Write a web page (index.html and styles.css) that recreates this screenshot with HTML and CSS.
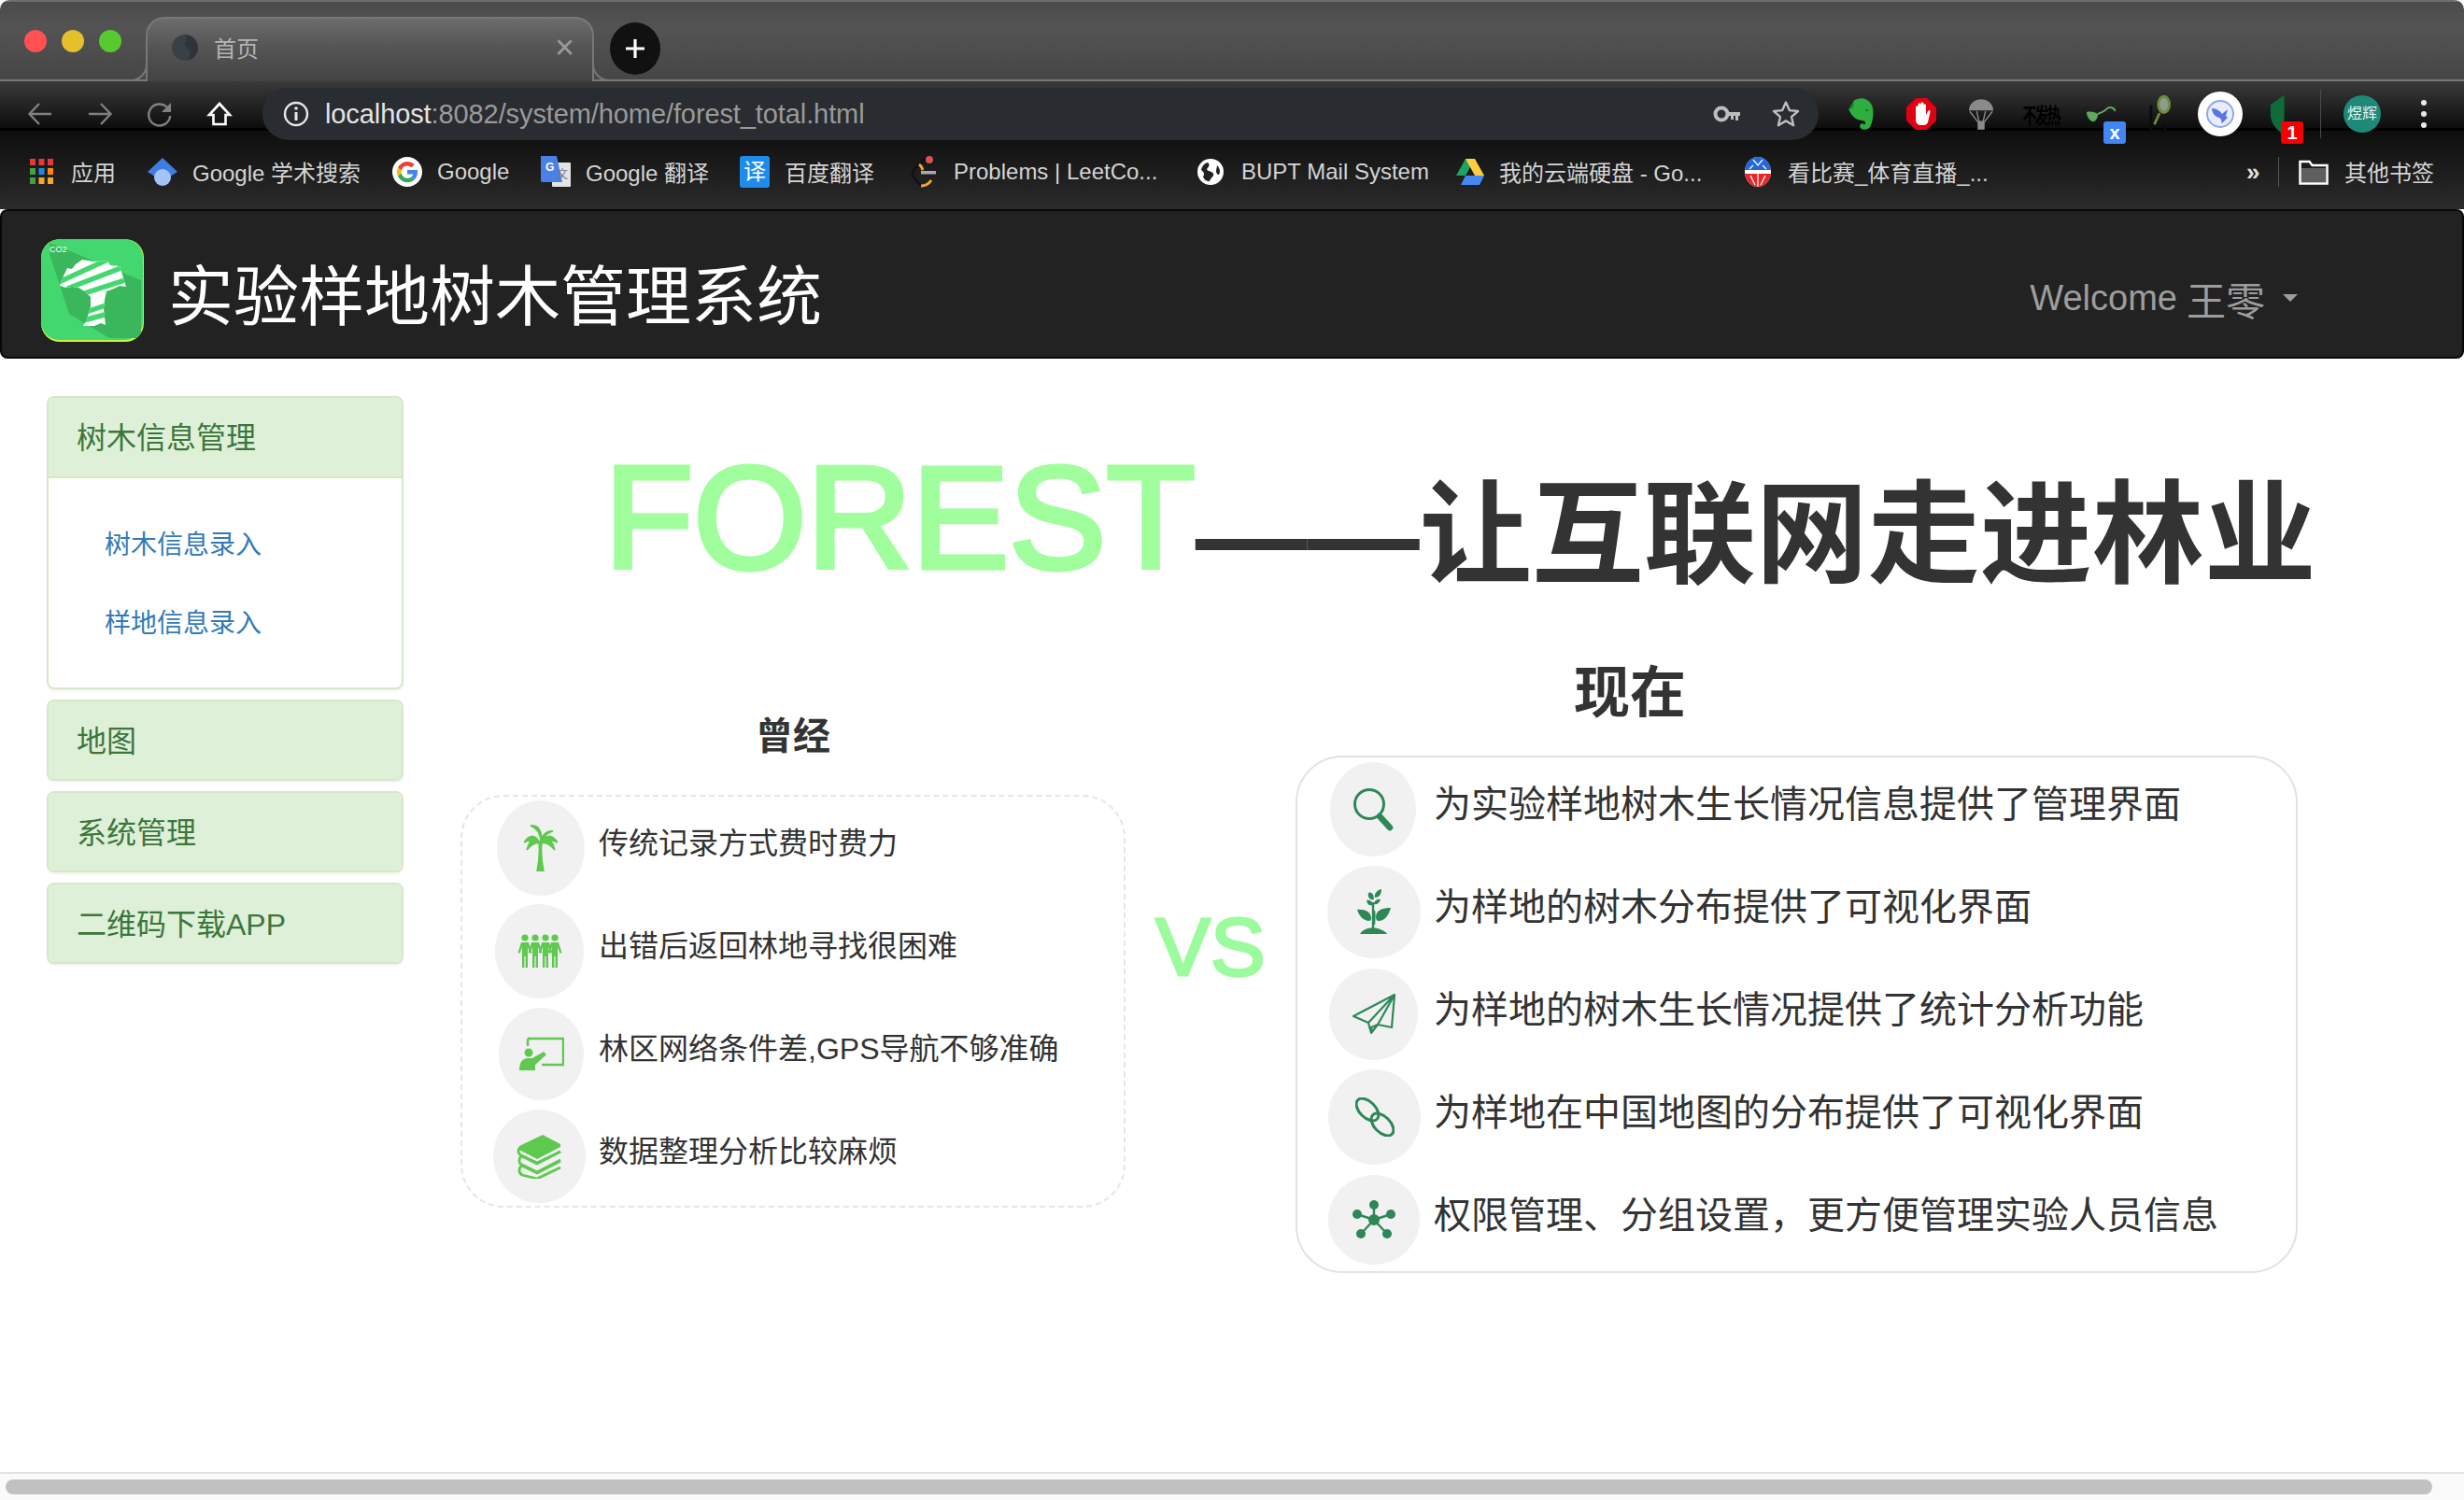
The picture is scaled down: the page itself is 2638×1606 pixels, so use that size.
FILE: index.html
```html
<!DOCTYPE html>
<html lang="zh">
<head>
<meta charset="utf-8">
<title>首页</title>
<link rel="stylesheet" href="styles.css">
</head>
<body>
<svg class="defs" width="0" height="0" aria-hidden="true">
  <symbol id="person" viewBox="0 0 16 36">
    <circle cx="8" cy="4" r="3.6"/>
    <path d="M4 9h8l3.5 11-2 .8L11 14v22H8.6V24H7.4v12H5V14L2.500 20.800l-2-.8z"/>
  </symbol>
</svg>
<div class="browser">
  <div class="tabstrip">
    <div class="lights"><span class="light red"></span><span class="light yellow"></span><span class="light green"></span></div>
    <div class="tab">
      <svg class="favicon" viewBox="0 0 28 28"><circle cx="14" cy="14" r="14" fill="#3a4048"/><path d="M14 0c5 4-3 8 1 13s5 2 4 9-4 6-5 6C22 28 28 21 28 14S21 0 14 0z" fill="#2f343a"/></svg>
      <span class="tab-title">首页</span>
      <span class="tab-close">×</span>
    </div>
    <div class="newtab"><svg viewBox="0 0 24 24" width="24" height="24"><path d="M12 2v20M2 12h20" stroke="#fff" stroke-width="3.200"/></svg></div>
  </div>
  <div class="toolbar">
    <div class="toolbar-inner">
      <div class="navcells">
        <span class="cell"><svg viewBox="0 0 28 28" width="28" height="28"><path d="M26 14H3M13 3 2.500 14 13 25" fill="none" stroke="#808080" stroke-width="2.400"/></svg></span>
        <span class="cell"><svg viewBox="0 0 28 28" width="28" height="28"><path d="M2 14h23M15 3l10.500 11L15 25" fill="none" stroke="#808080" stroke-width="2.400"/></svg></span>
        <span class="cell"><svg viewBox="0 0 28 28" width="28" height="28"><path d="M22 7a11.500 11.500 0 1 0 3.200 9" fill="none" stroke="#808080" stroke-width="2.400"/><path d="M26 2v10H16z" fill="#808080"/></svg></span>
        <span class="cell"><svg viewBox="0 0 28 28" width="28" height="28"><path d="M14 3 3 15h4.500v10h13V15H25z" fill="none" stroke="#fff" stroke-width="2.600"/></svg></span>
      </div>
      <div class="omnibox">
        <svg class="info" viewBox="0 0 28 28" width="28" height="28"><circle cx="14" cy="14" r="12" fill="none" stroke="#e8e8e8" stroke-width="2.400"/><path d="M14 12v9" stroke="#e8e8e8" stroke-width="3"/><circle cx="14" cy="8" r="1.800" fill="#e8e8e8"/></svg>
        <span class="url"><span class="host">localhost</span>:8082/system/home/forest_total.html</span>
        <span class="omni-right">
          <svg viewBox="0 0 30 20" width="30" height="20"><circle cx="9" cy="10" r="6.500" fill="none" stroke="#bdbdbd" stroke-width="4"/><path d="M15 8h14v4h-2v5h-3v-5h-2v4h-3v-4h-4z" fill="#bdbdbd"/></svg>
          <svg viewBox="0 0 30 30" width="30" height="30"><path d="m15 2.500 3.800 8.600 9.200.9-7 6.100 2.100 9.100L15 22.400l-8.100 4.800L9 18.100 2 12l9.200-.9z" fill="none" stroke="#bdbdbd" stroke-width="2.400" stroke-linejoin="round"/></svg>
        </span>
      </div>
      <div class="extensions">
        <span class="cell"><svg viewBox="0 0 30 36" width="28" height="34"><path d="M6 3c2-2 6-3 10-3 6 1 11 5 12 12 1 6 0 13-2 18-1 4-4 6-8 6-3 0-5-2-5-4 0-3 3-4 5-2 2 1 2-3 0-4-3-1-8-1-10-3-3-2-6-6-8-11 3 0 5-1 5-3 0-2 0-4 1-6z" fill="#2dae3f"/><path d="M6 3v8H1z" fill="#1f8a2e"/><path d="M19 12c2 0 4 1 4 3-2 0-3 0-4-3z" fill="#1a7a28"/></svg></span>
        <span class="cell"><svg viewBox="0 0 32 36" width="32" height="36"><path d="M10 1h12l10 10v14L22 35H10L0 25V11z" fill="#e00012"/><path d="M10 17v-6c0-2 2.500-2 2.500 0v4-7c0-2 3-2 3 0v7-8c0-2 3-2 3 0v8-6c0-2 2.500-2 2.500 0v10l2-4c1-2 3-1 2.500 1L23 27c-1 2-2 3-5 3h-3c-3 0-5-3-5-6z" fill="#fff"/></svg></span>
        <span class="cell"><svg viewBox="0 0 30 36" width="28" height="34"><path d="M1 14C1 6 8 1 15 1s14 5 14 13z" fill="#8a8a8a"/><path d="M2 15l10 13M28 15 18 28M10 15l3 13M20 15l-3 13" stroke="#8a8a8a" stroke-width="1.500"/><rect x="11" y="26" width="8" height="10" fill="#8a8a8a"/></svg></span>
        <span class="cell"><span class="nofever">不发热</span></span>
        <span class="cell ext-badged"><svg viewBox="0 0 32 20" width="32" height="20"><path d="M1 8c5-1 9 0 12 2 0 5-3 9-6 8-3-1-6-5-6-10z" fill="#5fa85c"/><path d="M13 10c4-2 8-3 10-6 3-2 7-1 9 3" fill="none" stroke="#5fa85c" stroke-width="2"/></svg><span class="badge badge-blue">x</span></span>
        <span class="cell"><svg viewBox="0 0 26 48" width="24" height="46"><ellipse cx="17" cy="13" rx="8" ry="11" fill="#6f8b3d"/><ellipse cx="17" cy="13" rx="5" ry="7.500" fill="#8d9a8c"/><path d="M12 23 6 36" stroke="#6f8b3d" stroke-width="3"/><path d="M2 14v30h16v-8" fill="none" stroke="#0c0c0c" stroke-width="3"/></svg></span>
        <span class="cell"><span class="surge"><svg viewBox="0 0 32 32" width="32" height="32"><circle cx="16" cy="16" r="14" fill="#e8eefc" stroke="#8ea7f2" stroke-width="2"/><path d="M7 10c5 0 9 3 11 6l6-5-2 7 2 2c-3 2-4 5-7 6 1-3 0-5-2-6C10 19 7 14 7 10z" fill="#5876e6"/></svg></span></span>
        <span class="cell ext-badged"><svg viewBox="0 0 24 44" width="22" height="44"><path d="M17 0v36l-4 8C8 40 2 34 1 24V11z" fill="#0f6b3a"/></svg><span class="badge badge-red">1</span></span>
      </div>
      <span class="tool-sep"></span>
      <span class="avatar">煜辉</span>
      <span class="menu-dots"><i></i><i></i><i></i></span>
    </div>
  </div>
  <div class="bookmarks">
    <a class="bm bm-apps"><svg viewBox="0 0 25 27" width="25" height="27"><g fill="#e53935"><rect width="6" height="7"/><rect x="9.500" width="6" height="7"/><rect x="19" width="6" height="7"/></g><rect y="10" width="6" height="7" fill="#43a047"/><rect x="9.500" y="10" width="6" height="7" fill="#1e88e5"/><rect x="19" y="10" width="6" height="7" fill="#fb8c00"/><g fill="#f9a825"><rect x="9.500" y="20" width="6" height="7"/><rect x="19" y="20" width="6" height="7"/></g><rect y="20" width="6" height="7" fill="#43a047"/></svg><span>应用</span></a>
    <a class="bm bm-scholar"><svg viewBox="0 0 32 30" width="32" height="30"><path d="M16 0 32 15l-8 5H8l-8-5z" fill="#3f7ee0"/><circle cx="16" cy="21" r="9" fill="#a6c3f5"/></svg><span>Google 学术搜索</span></a>
    <a class="bm bm-google"><svg viewBox="0 0 32 32" width="32" height="32"><circle cx="16" cy="16" r="16" fill="#fff"/><path d="M16 9.500a6.500 6.500 0 0 1 4.500 1.700l3.300-3.300A11.300 11.300 0 0 0 6 11.500l3.800 3A6.700 6.700 0 0 1 16 9.500z" fill="#ea4335"/><path d="M5.900 11.400a11.300 11.300 0 0 0 0 9.200l3.800-3a6.700 6.700 0 0 1 0-3.200z" fill="#fbbc05"/><path d="M9.700 17.600l-3.800 3A11.300 11.300 0 0 0 16 27.300c3 0 5.700-1 7.600-2.800l-3.600-2.800a6.700 6.700 0 0 1-10.300-4.100z" fill="#34a853"/><path d="M27 14H16v4.500h6.300a5.500 5.500 0 0 1-2.300 3.200l3.600 2.800C26 22.400 27.500 19 27 14z" fill="#4285f4"/></svg><span>Google</span></a>
    <a class="bm bm-trans"><svg viewBox="0 0 32 34" width="32" height="34"><rect x="12" y="7" width="20" height="26" rx="1" fill="#e4e4e4"/><path d="M0 0h17l6 28H2a2 2 0 0 1-2-2z" fill="#4a80e8"/><text x="5" y="16" class="ico-g">G</text><text x="17" y="24" class="ico-wen">文</text></svg><span>Google 翻译</span></a>
    <a class="bm bm-baidu"><span class="baidu-ico">译</span><span>百度翻译</span></a>
    <a class="bm bm-leet"><svg viewBox="0 0 28 34" width="28" height="34"><path d="M16 2 4 14c-3 4-3 7 0 10l7 8" fill="none" stroke="#111" stroke-width="2.500"/><path d="M11 32c5 0 9-3 11-6M9 9c3 2 3 4 4 6" fill="none" stroke="#f0a830" stroke-width="3"/><rect x="11" y="16" width="16" height="3.500" fill="#aaa"/><circle cx="20" cy="4" r="4" fill="#d9534f"/></svg><span>Problems | LeetCo...</span></a>
    <a class="bm bm-bupt"><svg viewBox="0 0 28 30" width="28" height="30"><circle cx="14" cy="15" r="14" fill="#fff"/><path d="M11 5c3 2 1 5-1 7 1 3 6 2 7 5s-3 4-4 8c-4 0-6-2-7-5 2-2 1-5-2-7 1-4 3-7 7-8zM21 8c3 3 4 7 2 10-2 0-3-2-3-4s1-4 1-6z" fill="#222"/></svg><span>BUPT Mail System</span></a>
    <a class="bm bm-drive"><svg viewBox="0 0 30 28" width="30" height="28"><path d="M10 0h10L10 18H0z" fill="#1da462"/><path d="M10 0h10l10 18H20z" fill="#ffcd40"/><path d="M5 28l5-10h20l-5 10z" fill="#4688f1"/></svg><span>我的云端硬盘 - Go...</span></a>
    <a class="bm bm-sport"><svg viewBox="0 0 28 32" width="28" height="32"><ellipse cx="14" cy="16" rx="14" ry="16" fill="#fff"/><path d="M0 14C1 6 7 0 14 0s13 6 14 14z" fill="#2467d8"/><path d="M0 18h28c-1 8-7 14-14 14S1 26 0 18z" fill="#e32a2a"/><path d="M9 3l5 6 5-6M5 13l4-4M23 13l-4-4M14 18v14M6 20l5 10M22 20l-5 10" stroke="#fff" stroke-width="1.200" fill="none"/></svg><span>看比赛_体育直播_...</span></a>
    <span class="bm-more">»</span>
    <span class="bm-sep"></span>
    <a class="bm bm-folder"><svg viewBox="0 0 32 28" width="32" height="28"><path d="M1.500 3h10l3 4h16v19.500h-29z" fill="none" stroke="#fff" stroke-width="2.500"/><rect x="3" y="10" width="26" height="15" fill="#5f5f5f"/></svg><span>其他书签</span></a>
  </div>
</div>

<header class="navbar">
  <div class="brand">
    <svg class="logo" viewBox="0 0 110 110" width="110" height="110">
      <defs>
        <clipPath id="logoclip"><rect width="110" height="110" rx="20"/></clipPath>
        <clipPath id="treeclip"><path d="M20 50C22 42 26 36 28 31L33 32 37 27 44 22 56 24 71 23 74 28 84 29 87 38 91 51 84 50 78 53 70 56 68 65 67 75 69 92 64 90 57 93 45 93 49 86 53 72 53 62 47 56 40 52 33 51 27 52Z"/></clipPath>
      </defs>
      <g clip-path="url(#logoclip)">
        <rect width="110" height="110" fill="#cdf03a"/>
        <rect width="109" height="108" rx="20" fill="#43d86f"/>
        <path d="M9 4 107 44v62H73L30 80 9 16z" fill="#3ab75c"/>
        <g clip-path="url(#treeclip)">
          <rect width="110" height="110" fill="#fff"/>
          <path d="M10 50 80 18M28 53 96 27M40 60 96 42M45 79 75 69M42 88 75 79" stroke="#43d86f" stroke-width="5.500" fill="none"/>
        </g>
        <text x="9" y="14" class="logo-co">CO2</text>
      </g>
    </svg>
    <span class="brand-name">实验样地树木管理系统</span>
  </div>
  <div class="nav-user"><span class="welcome">Welcome</span> <span class="user-name">王零</span><span class="caret"></span></div>
</header>

<div class="page">
  <aside class="sidebar">
    <section class="panel">
      <h4 class="panel-heading">树木信息管理</h4>
      <ul class="panel-body">
        <li><a>树木信息录入</a></li>
        <li><a>样地信息录入</a></li>
      </ul>
    </section>
    <section class="panel"><h4 class="panel-heading solo">地图</h4></section>
    <section class="panel"><h4 class="panel-heading solo">系统管理</h4></section>
    <section class="panel"><h4 class="panel-heading solo">二维码下载APP</h4></section>
  </aside>

  <main class="content">
    <h1 class="hero"><span class="hero-brand">FOREST</span>——让互联网走进林业</h1>
    <div class="compare">
      <section class="col-old">
        <h3 class="old-title">曾经</h3>
        <ul class="box box-old">
          <li class="row"><span class="disc d1"><svg viewBox="0 0 36 50" width="36" height="50" class="ico-light"><path d="M16 19c1 10 0 21-2 31h7c-2-10-3-21-2-31zM17 20C13 10 6 10 0 19c5-3 10-3 17 1zM19 20c4-10 11-10 17-1-5-3-10-3-17 1zM17 19C13 13 7 13 3 27c5-6 9-8 14-8zM19 19c4-6 10-6 14 8-5-6-9-8-14-8zM18 19C18 10 15 4 7 1c7-1 14 5 11 18zM18 19c1-8 6-13 13-12-6 1-9 6-13 12z" stroke="#5ec84f" stroke-width="1.500"/></svg></span><span class="row-text">传统记录方式费时费力</span></li>
          <li class="row"><span class="disc d2"><svg viewBox="0 0 48 36" width="48" height="36" class="ico-light"><use href="#person" x="0" width="16" height="36"/><use href="#person" x="11" width="16" height="36"/><use href="#person" x="22" width="16" height="36"/><use href="#person" x="32" width="16" height="36"/></svg></span><span class="row-text">出错后返回林地寻找很困难</span></li>
          <li class="row"><span class="disc d3"><svg viewBox="0 0 48 36" width="48" height="36" class="ico-light"><path d="M9 2h38v28H24" fill="none" stroke="#5ec84f" stroke-width="2.400"/><path d="M9 2v8" fill="none" stroke="#5ec84f" stroke-width="2.400"/><circle cx="10" cy="17" r="4.500"/><path d="M0 36c0-8 3-13 9-13h5l12-7 3 3-12 11v6z"/></svg></span><span class="row-text">林区网络条件差,GPS导航不够准确</span></li>
          <li class="row"><span class="disc d4"><svg viewBox="0 0 50 48" width="50" height="48"><path d="M3 13 28 1l19 10v3L22 27 3 17z" fill="#5ec84f"/><path d="M47 19 22 32 6 24c-4 1-4 8 0 9l16 8 25-13M47 29 22 42 6 34c-4 2-4 8 0 10l16 4 25-12" fill="none" stroke="#5ec84f" stroke-width="2.800"/><path d="M5 14c-4 2-4 7 0 9l17 8 25-12" fill="none" stroke="#5ec84f" stroke-width="2.800"/></svg></span><span class="row-text">数据整理分析比较麻烦</span></li>
        </ul>
      </section>
      <div class="vs">VS</div>
      <section class="col-new">
        <h2 class="new-title">现在</h2>
        <ul class="box box-new">
          <li class="row"><span class="disc e1"><svg viewBox="0 0 44 48" width="44" height="48" class="ico-dark"><circle cx="18" cy="19" r="15.500" fill="none" stroke="#2e8757" stroke-width="3"/><path d="M29 32l11 12" stroke="#2e8757" stroke-width="6.500" stroke-linecap="round"/></svg></span><span class="row-text">为实验样地树木生长情况信息提供了管理界面</span></li>
          <li class="row"><span class="disc e2"><svg viewBox="0 0 36 48" width="36" height="48" class="ico-dark"><path d="M17 47V14M18 38c0-4 1-9 0-15" stroke="#2e8757" stroke-width="2.400" fill="none"/><path d="M0 22c7-1 15 2 15 9 0 2-1 3-2 3C7 34 2 29 0 22zM36 20c-8 0-16 2-16 10 0 2 1 4 3 4 7 0 11-7 13-14zM12 4c3-2 6 1 6 7C14 12 11 9 12 4zM26 0c0 5-2 9-7 9-1-4 2-8 7-9zM10 12c4-1 7 2 7 5-3 1-6 0-7-5zM25 11c-1 3-3 6-7 5 0-3 3-6 7-5z"/><path d="M3 48c3-5 8-6 14-7 6 1 12 3 15 7z"/></svg></span><span class="row-text">为样地的树木分布提供了可视化界面</span></li>
          <li class="row"><span class="disc e3"><svg viewBox="0 0 46 44" width="46" height="44"><path d="M45 1 1 24l16 7 3 11 7-9 15 3zM45 1 17 31M45 1 27 33l-7 3 1 6M20 36l7-3" fill="none" stroke="#2e8757" stroke-width="2.200" stroke-linejoin="round"/></svg></span><span class="row-text">为样地的树木生长情况提供了统计分析功能</span></li>
          <li class="row"><span class="disc e4"><svg viewBox="0 0 42 42" width="42" height="42"><ellipse cx="13" cy="13" rx="14.500" ry="8.500" transform="rotate(45 13 13)" fill="none" stroke="#2e8757" stroke-width="3"/><ellipse cx="29" cy="29" rx="14.500" ry="8.500" transform="rotate(45 29 29)" fill="none" stroke="#2e8757" stroke-width="3"/></svg></span><span class="row-text">为样地在中国地图的分布提供了可视化界面</span></li>
          <li class="row"><span class="disc e5"><svg viewBox="0 0 46 42" width="46" height="42" class="ico-dark"><path d="M23 21 23 5M23 21 5 15M23 21 41 15M23 21 9 36M23 21 37 36" stroke="#2e8757" stroke-width="2.400"/><circle cx="23" cy="21" r="6"/><circle cx="23" cy="5" r="5"/><circle cx="5" cy="15" r="5"/><circle cx="41" cy="15" r="5"/><circle cx="9" cy="36" r="5"/><circle cx="37" cy="36" r="5"/></svg></span><span class="row-text">权限管理、分组设置，更方便管理实验人员信息</span></li>
        </ul>
      </section>
    </div>
  </main>
</div>

<div class="hscroll"><div class="hscroll-thumb"></div></div>
</body>
</html>
```

FILE: styles.css
```css
* { box-sizing: border-box; }
html, body { margin: 0; padding: 0; }
body {
  width: 2638px;
  height: 1606px;
  overflow: hidden;
  display: flex;
  flex-direction: column;
  background: #fff;
  color: #333;
  font-family: "Liberation Sans", "Noto Sans CJK SC", sans-serif;
}
ul { list-style: none; margin: 0; padding: 0; }
h1, h2, h3, h4 { margin: 0; }
.defs { position: absolute; }

/* browser chrome */
.browser { flex: 0 0 224px; border-radius: 10px 10px 0 0; overflow: hidden; }
.tabstrip {
  height: 87px;
  display: flex;
  align-items: flex-start;
  background: linear-gradient(#4c4c4c, #535353 35%, #464646);
  border-top: 2px solid #6e6e6e;
  border-bottom: 2px solid #787878;
}
.lights { display: flex; gap: 16px; padding: 30px 0 0 26px; width: 156px; }
.light { width: 24px; height: 24px; border-radius: 50%; }
.red { background: #ff5151; }
.yellow { background: #e5c02a; }
.green { background: #58c92e; }
.tab {
  position: relative;
  width: 480px;
  height: 69px;
  margin-top: 16px;
  display: flex;
  align-items: center;
  padding: 0 0 6px 26px;
  background: linear-gradient(#6c6c6c, #555 45%, #434343);
  border: 2px solid #787878;
  border-bottom: 0;
  border-radius: 20px 20px 0 0;
  z-index: 1;
}
.tab::before, .tab::after {
  content: "";
  position: absolute;
  bottom: 0;
  width: 18px;
  height: 18px;
  border-bottom: 2px solid #787878;
}
.tab::before { left: -20px; border-right: 2px solid #787878; border-bottom-right-radius: 18px; }
.tab::after { right: -20px; border-left: 2px solid #787878; border-bottom-left-radius: 18px; }
.favicon { width: 28px; height: 28px; flex: none; }
.tab-title { margin-left: 17px; font-size: 24px; color: #b4b4b4; }
.tab-close { margin-left: auto; margin-right: 19px; font-size: 36px; line-height: 1; color: #9a9a9a; }
.newtab {
  width: 54px;
  height: 56px;
  margin: 22px 0 0 17px;
  border-radius: 50%;
  background: #111;
  display: flex;
  align-items: center;
  justify-content: center;
  z-index: 1;
}
.toolbar { height: 53px; padding-top: 7px; background: linear-gradient(#3a3a3a, #0d0d0d); border-bottom: 3px solid #000; }
.toolbar-inner { height: 56px; display: flex; align-items: center; padding-left: 11px; position: relative; z-index: 2; }
.navcells { display: flex; width: 270px; }
.cell { position: relative; width: 64px; height: 56px; display: flex; align-items: center; justify-content: center; flex: none; }
.omnibox {
  width: 1666px;
  height: 56px;
  display: flex;
  align-items: center;
  padding: 0 20px 0 22px;
  background: #292c30;
  border-radius: 28px;
  flex: none;
}
.info { flex: none; }
.url { margin-left: 17px; font-size: 29px; letter-spacing: -0.1px; color: #9a9a9a; }
.host { color: #e4e4e4; }
.omni-right { margin-left: auto; display: flex; align-items: center; gap: 33px; }
.extensions { display: flex; margin-left: 14px; }
.nofever { font-size: 15px; font-weight: 700; color: #000; letter-spacing: -2px; transform: scaleY(1.500); white-space: nowrap; }
.badge {
  position: absolute;
  right: 4px;
  bottom: -4px;
  width: 24px;
  height: 24px;
  border-radius: 3px;
  color: #fff;
  font-size: 20px;
  font-weight: 700;
  line-height: 24px;
  text-align: center;
}
.badge-blue { background: #4285f4; right: 5px; }
.badge-red { background: #f40000; right: 7px; }
.surge { width: 48px; height: 48px; border-radius: 50%; background: #fff; display: flex; align-items: center; justify-content: center; }
.tool-sep { width: 1px; height: 52px; background: #4a4a4a; margin-left: 11px; }
.avatar {
  width: 40px;
  height: 40px;
  margin-left: 24px;
  border-radius: 50%;
  background: #1d8a78;
  color: #e8f5f2;
  font-size: 16px;
  line-height: 40px;
  text-align: center;
  white-space: nowrap;
  overflow: hidden;
  flex: none;
}
.menu-dots { margin-left: 43px; display: flex; flex-direction: column; gap: 6px; }
.menu-dots i { width: 6px; height: 6px; border-radius: 50%; background: #e8e8e8; }
.bookmarks {
  height: 84px;
  display: flex;
  align-items: center;
  padding: 3px 0 0 32px;
  background: linear-gradient(#0e0e0e, #2b2b2b);
  font-size: 24px;
  color: #d4d4d4;
  white-space: nowrap;
}
.bm { display: flex; align-items: center; gap: 16px; flex: none; }
.bm-apps { width: 126px; gap: 19px; }
.bm-scholar { width: 262px; }
.bm-google { width: 159px; }
.bm-trans { width: 213px; }
.bm-baidu { width: 183px; }
.bm-leet { width: 307px; gap: 18px; }
.bm-bupt { width: 277px; gap: 19px; }
.bm-drive { width: 309px; }
.bm-sport { width: 537px; gap: 18px; }
.bm-folder { margin-left: 21px; gap: 17px; }
.bm-more { width: 12px; font-size: 26px; font-weight: 700; color: #e0e0e0; line-height: 1; }
.bm-sep { width: 1px; height: 32px; margin-left: 22px; background: #555; }
.baidu-ico { width: 32px; height: 34px; border-radius: 3px; background: #1f8ceb; color: #fff; font-size: 24px; line-height: 34px; text-align: center; }
.ico-g { font: 700 12px "Liberation Sans", sans-serif; fill: #fff; }
.ico-wen { font: 12px "Noto Sans CJK SC", sans-serif; fill: #777; }

/* site navbar */
.navbar {
  flex: 0 0 160px;
  display: flex;
  align-items: center;
  justify-content: space-between;
  padding: 14px 176px 0 44px;
  background: #222;
  border: 2px solid #080808;
  border-radius: 8px;
}
.brand { display: flex; align-items: center; gap: 26px; margin-left: -2px; }
.logo { flex: none; }
.logo-co { font: 9px "Liberation Sans", sans-serif; fill: #fff; }
.brand-name { padding-top: 16px; font-size: 70px; line-height: 90px; color: #fff; }
.nav-user { display: flex; align-items: center; gap: 10px; padding-top: 16px; color: #9d9d9d; }
.welcome { font-size: 38px; }
.user-name { font-size: 42px; }
.caret { width: 0; height: 0; margin-left: 9px; border: 8px solid transparent; border-top-color: #9d9d9d; border-bottom: 0; }

/* page */
.page { flex: 1; display: flex; min-height: 0; }
.sidebar { flex: 0 0 432px; display: flex; flex-direction: column; gap: 11px; padding: 40px 0 0 50px; }
.panel {
  border: 2px solid #d6e9c6;
  border-radius: 8px;
  background: #fff;
  box-shadow: 0 2px 2px rgba(0, 0, 0, .05);
  overflow: hidden;
}
.panel-heading {
  height: 86px;
  padding: 0 0 4px 30px;
  display: flex;
  align-items: center;
  background: #dff0d8;
  border-bottom: 2px solid #d6e9c6;
  color: #3c763d;
  font-size: 32px;
  font-weight: 400;
}
.panel-heading.solo { height: 83px; border-bottom: 0; }
.panel-body { padding: 27px 0 29px 60px; font-size: 28px; color: #337ab7; }
.panel-body li { height: 84px; display: flex; align-items: center; }

.content { flex: 1; min-width: 0; padding-left: 61px; }
.hero {
  height: 324px;
  padding: 80px 0 0 154px;
  font-size: 120px;
  line-height: 180px;
  font-weight: 700;
  color: #333;
  white-space: nowrap;
}
.hero-brand { font-size: 156px; color: #a0ff9c; font-weight: 400; -webkit-text-stroke: 5px #a0ff9c; vertical-align: 7px; }
.compare { display: flex; align-items: flex-start; }
.col-old { flex: 0 0 712px; padding-top: 55px; }
.old-title { height: 50px; font-size: 40px; line-height: 50px; font-weight: 700; text-align: center; margin-bottom: 38px; }
.vs { flex: 0 0 182px; margin-top: 256px; font-size: 88px; line-height: 100px; font-weight: 400; -webkit-text-stroke: 3px #9cfb9c; color: #9cfb9c; text-align: center; }
.col-new { flex: 0 0 1073px; }
.new-title { height: 70px; padding-left: 298px; font-size: 60px; line-height: 70px; font-weight: 700; margin-bottom: 31px; }
.box { background: #fff; }
.box-old { height: 442px; padding: 0 0 0 34px; border: 2px dashed #e6e6e6; border-radius: 46px; }
.box-new { height: 554px; padding: 0 0 0 32px; border: 2px solid #e2e2e2; border-radius: 50px; }
.row { height: 110px; display: flex; align-items: center; gap: 14px; }
.disc {
  flex: none;
  border-radius: 50%;
  background: #f1f1f1;
  display: flex;
  align-items: center;
  justify-content: center;
}
.row-text { white-space: nowrap; }
.box-old .row-text { font-size: 32px; padding-bottom: 16px; }
.box-new .row-text { font-size: 40px; padding-bottom: 17px; }
.d1 { width: 94px; height: 102px; margin: 0 1px 0 3px; }
.d2 { width: 95px; height: 101px; margin: 0 2px 0 1px; }
.d3 { width: 91px; height: 99px; margin: 0 2px 0 5px; }
.d4 { width: 99px; height: 100px; margin: 0 0 0 -1px; }
.e1 { width: 92px; height: 101px; margin: 0 5px 0 3px; }
.e2 { width: 100px; height: 99px; }
.e3 { width: 95px; height: 98px; margin: 0 3px 0 2px; }
.e4 { width: 99px; height: 102px; margin: 0 0 0 1px; }
.e5 { width: 98px; height: 96px; margin: 0 1px; }
.ico-light { fill: #5ec84f; }
.ico-dark { fill: #2e8757; }

.hscroll {
  flex: 0 0 30px;
  padding: 6px 34px 6px 6px;
  background: #fafafa;
  border-top: 2px solid #e2e2e2;
}
.hscroll-thumb { height: 16px; border-radius: 8px; background: #c1c1c1; }
```
